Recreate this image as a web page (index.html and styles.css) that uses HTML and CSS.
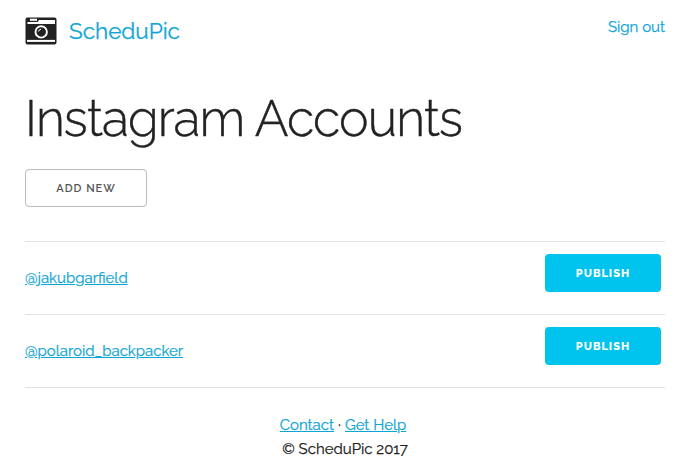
FILE: index.html
```
<!DOCTYPE html>
<html lang="en">
<head>
<meta charset="utf-8">
<title>ScheduPic</title>
<link rel="stylesheet" href="styles.css">
</head>
<body>
<div class="container">
  <header class="header">
    <a class="brand" href="#">
      <svg class="camera" width="32" height="28" viewBox="0 0 32 28" aria-hidden="true">
        <rect x="0.500" y="0.500" width="31" height="27" rx="2" fill="#222"/>
        <path d="M2.500 5H12.500L14 3H30V7H2.500Z" fill="#fff"/>
        <rect x="5" y="1.700" width="7" height="2.100" fill="#fff"/>
        <rect x="2" y="22.900" width="28" height="2" fill="#fff"/>
        <circle cx="16.200" cy="14.900" r="7.700" fill="#222"/>
        <circle cx="16.200" cy="14.900" r="5.700" fill="#222" stroke="#fff" stroke-width="1.900"/>
        <path d="M13.500 14.500A2.800 2.800 0 0 1 16 12.200" fill="none" stroke="#fff" stroke-width="1"/>
      </svg>
      <span class="brand-name">ScheduPic</span>
    </a>
    <a class="sign-out" href="#">Sign out</a>
  </header>
  <main>
    <h1>Instagram Accounts</h1>
    <a class="button button-add" href="#">ADD NEW</a>
    <ul class="accounts">
      <li><a class="handle" href="#">@jakubgarfield</a><a class="button button-primary" href="#">PUBLISH</a></li>
      <li><a class="handle" href="#">@polaroid_backpacker</a><a class="button button-primary" href="#">PUBLISH</a></li>
    </ul>
  </main>
  <footer>
    <div class="links"><a href="#">Contact</a><span>·</span><a href="#">Get Help</a></div>
    <div class="copyright">© ScheduPic 2017</div>
  </footer>
</div>
</body>
</html>
```
FILE: styles.css
```
* { box-sizing: border-box; }
body { margin: 0; background: #fff; color: #222; font: 400 15px/24px Raleway, Lato, sans-serif; -webkit-text-stroke: 0.25px; }
a { color: #0fa5d6; }
.container { padding: 0 24px 0 25px; }
.header { display: flex; justify-content: space-between; align-items: flex-start; height: 92px; padding-top: 15px; }
.brand { display: flex; gap: 12px; text-decoration: none; }
.camera { display: block; margin-top: 2px; }
.brand-name { font-size: 22.5px; line-height: 32px; }
.sign-out { text-decoration: none; }
h1 { margin: 0; font-size: 50px; line-height: 54px; font-weight: 300; letter-spacing: -0.9px; white-space: nowrap; -webkit-text-stroke: 0.4px; }
.button { display: flex; align-items: center; justify-content: center; height: 38px; border-radius: 4px; font-size: 11px; letter-spacing: 1px; text-decoration: none; -webkit-text-stroke: 0; }
.button-add { width: 122px; margin-top: 23px; border: 1px solid #bbb; color: #555; font-weight: 600; padding-top: 1px; }
.button-primary { width: 116px; margin: 12px 4px 0 0; padding-top: 2px; background: #00c3ee; color: #fff; font-weight: 800; }
.accounts { list-style: none; margin: 34px 0 0; padding: 0; border-top: 1px solid #e1e1e1; }
.accounts li { display: flex; justify-content: space-between; height: 73px; border-bottom: 1px solid #e1e1e1; }
.handle { align-self: center; }
footer { margin-top: 25px; display: flex; flex-direction: column; align-items: center; }
.links { display: flex; gap: 4px; margin-right: 4px; }
```
